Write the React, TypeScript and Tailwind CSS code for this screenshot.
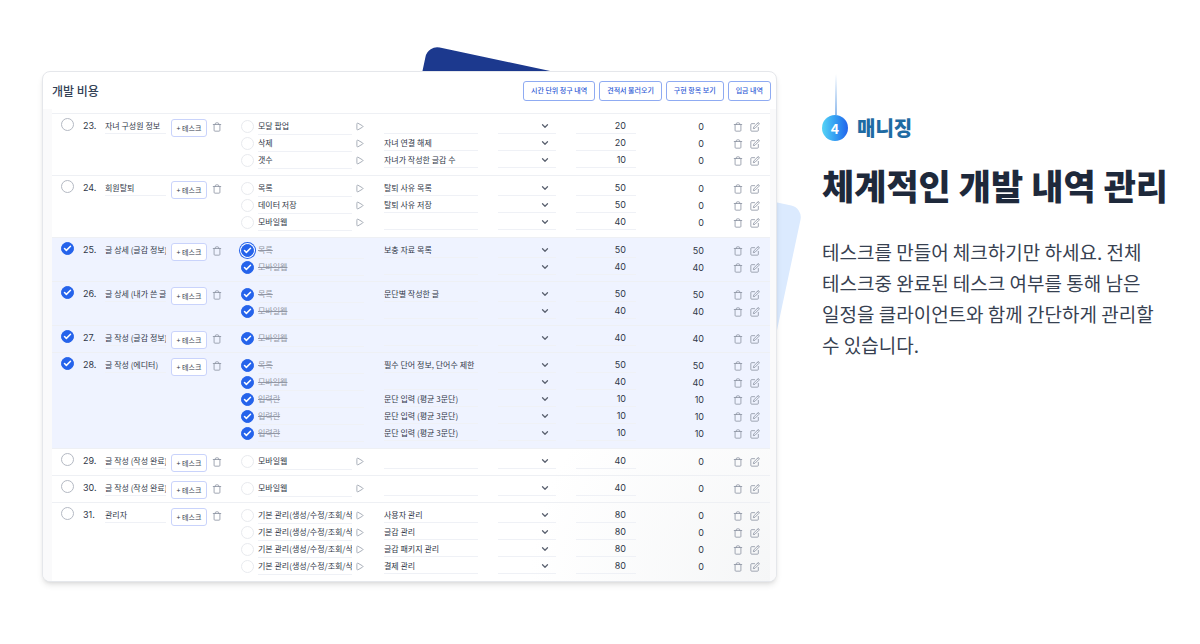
import { useState } from "react";
import { Check, ChevronDown, Play, Trash } from "lucide-react";
import { FiEdit } from "react-icons/fi";
import clsx from "clsx";

type Task = {
  name: string;
  note?: string;
  amount: number;
  focused?: boolean;
};

type Feature = {
  no: number;
  name: string;
  done?: boolean;
  tasks: Task[];
};

const ACTIONS = ["시간 단위 청구 내역", "견적서 불러오기", "구현 항목 보기", "입금 내역"];

const FEATURES: Feature[] = [
  {
    no: 23,
    name: "자녀 구성원 정보",
    tasks: [
      { name: "모달 팝업", amount: 20 },
      { name: "삭제", note: "자녀 연결 해제", amount: 20 },
      { name: "갯수", note: "자녀가 작성한 글감 수", amount: 10 },
    ],
  },
  {
    no: 24,
    name: "회원탈퇴",
    tasks: [
      { name: "목록", note: "탈퇴 사유 목록", amount: 50 },
      { name: "데이터 저장", note: "탈퇴 사유 저장", amount: 50 },
      { name: "모바일웹", amount: 40 },
    ],
  },
  {
    no: 25,
    name: "글 상세 (글감 정보)",
    done: true,
    tasks: [
      { name: "목록", note: "보충 자료 목록", amount: 50, focused: true },
      { name: "모바일웹", amount: 40 },
    ],
  },
  {
    no: 26,
    name: "글 상세 (내가 쓴 글)",
    done: true,
    tasks: [
      { name: "목록", note: "문단별 작성한 글", amount: 50 },
      { name: "모바일웹", amount: 40 },
    ],
  },
  {
    no: 27,
    name: "글 작성 (글감 정보)",
    done: true,
    tasks: [{ name: "모바일웹", amount: 40 }],
  },
  {
    no: 28,
    name: "글 작성 (에디터)",
    done: true,
    tasks: [
      { name: "목록", note: "필수 단어 정보, 단어수 제한", amount: 50 },
      { name: "모바일웹", amount: 40 },
      { name: "입력란", note: "문단 입력 (평균 3문단)", amount: 10 },
      { name: "입력란", note: "문단 입력 (평균 3문단)", amount: 10 },
      { name: "입력란", note: "문단 입력 (평균 3문단)", amount: 10 },
    ],
  },
  {
    no: 29,
    name: "글 작성 (작성 완료)",
    tasks: [{ name: "모바일웹", amount: 40 }],
  },
  {
    no: 30,
    name: "글 작성 (작성 완료)",
    tasks: [{ name: "모바일웹", amount: 40 }],
  },
  {
    no: 31,
    name: "관리자",
    tasks: [
      { name: "기본 관리(생성/수정/조회/삭제)", note: "사용자 관리", amount: 80 },
      { name: "기본 관리(생성/수정/조회/삭제)", note: "글감 관리", amount: 80 },
      { name: "기본 관리(생성/수정/조회/삭제)", note: "글감 패키지 관리", amount: 80 },
      { name: "기본 관리(생성/수정/조회/삭제)", note: "결제 관리", amount: 80 },
    ],
  },
];

const field = "block h-4 border-b border-[#eff1f6] bg-transparent p-0 text-[8px] leading-4 outline-none";

function RoundCheck({ label, initial, faint, focused }: { label: string; initial: boolean; faint?: boolean; focused?: boolean }) {
  const [checked, setChecked] = useState(initial);
  return (
    <label className="grid size-[13px] place-items-center">
      <input
        type="checkbox"
        aria-label={label}
        checked={checked}
        onChange={(e) => setChecked(e.target.checked)}
        className={clsx(
          "col-start-1 row-start-1 size-[13px] appearance-none rounded-full border bg-white checked:border-[#2563eb] checked:bg-[#2563eb]",
          faint ? "border-[#e8eaee]" : "border-[#b4b9c3]",
          focused && "ring-1 ring-[#2563eb] ring-offset-1"
        )}
      />
      {checked && <Check className="pointer-events-none z-10 col-start-1 row-start-1 size-[9px] text-white" strokeWidth={4} />}
    </label>
  );
}

function IconButton({ label, children }: { label: string; children: React.ReactNode }) {
  return (
    <button type="button" aria-label={label} className="block text-[#8e95a3] hover:text-gray-700">
      {children}
    </button>
  );
}

function FeatureRows({ feature }: { feature: Feature }) {
  const { no, name, done = false, tasks } = feature;
  const span = tasks.length;
  const top = "border-t border-[#eef0f4] pt-1 align-top";

  return (
    <tbody className={clsx(done && "bg-[#eff3ff]")}>
      {tasks.map((task, i) => {
        const first = i === 0;
        const last = i === span - 1;
        const cell = clsx(
          "align-top",
          first && "border-t border-[#eef0f4] pt-1",
          last && (span > 2 ? "pb-1.5" : "pb-[5px]")
        );
        const label = `${no}-${i + 1}`;
        return (
          <tr key={i}>
            {first && (
              <>
                <td rowSpan={span} className={clsx(top, "pl-[9px]")}>
                  <RoundCheck label={`${no} 완료`} initial={done} />
                </td>
                <td rowSpan={span} className={clsx(top, "pl-1.5 font-['Inter','Noto_Sans_CJK_KR',sans-serif] text-[9px] leading-[16px]")}>
                  {no}.
                </td>
                <td rowSpan={span} className={top}>
                  <input aria-label={`${no} 기능명`} defaultValue={name} className={clsx(field, "w-[61px]")} />
                </td>
                <td rowSpan={span} className={top}>
                  <button
                    type="button"
                    className="mt-px block h-[18px] w-9 rounded-[3px] border border-[#c9d3fb] bg-white text-[7px] leading-4 whitespace-nowrap"
                  >
                    + 테스크
                  </button>
                </td>
                <td rowSpan={span} className={clsx(top, "pl-px")}>
                  <div className="flex h-[17px] items-center">
                    <IconButton label={`${no} 삭제`}>
                      <Trash className="size-[10px]" strokeWidth={2} />
                    </IconButton>
                  </div>
                </td>
              </>
            )}
            <td className={cell}>
              <div className="flex h-[17px] items-center">
                <RoundCheck label={`${label} 완료`} initial={done} faint focused={task.focused} />
              </div>
            </td>
            <td className={cell}>
              <div className="flex h-[17px] items-center gap-[3px]">
                <input
                  aria-label={`${label} 테스크명`}
                  defaultValue={task.name}
                  className={clsx(field, done ? "w-[106px] text-[#9297a5] line-through" : "w-[94px]")}
                />
                {!done && (
                  <IconButton label={`${label} 시작`}>
                    <Play className="size-[9px]" strokeWidth={2} />
                  </IconButton>
                )}
              </div>
            </td>
            <td className={clsx(cell, "pr-5")}>
              <input aria-label={`${label} 설명`} defaultValue={task.note} className={clsx(field, "w-full")} />
            </td>
            <td className={cell}>
              <div className="grid w-[58px] items-center">
                <select aria-label={`${label} 담당자`} className={clsx(field, "col-start-1 row-start-1 w-full appearance-none")}>
                  <option></option>
                </select>
                <ChevronDown className="pointer-events-none col-start-1 row-start-1 mr-[6px] size-[10px] justify-self-end text-[#5b6270]" strokeWidth={3} />
              </div>
            </td>
            <td className={cell}>
              <input
                aria-label={`${label} 금액`}
                defaultValue={task.amount}
                className="block h-4 w-[60px] border-b border-[#eff1f6] bg-transparent pr-[10px] text-right font-['Inter',sans-serif] text-[9px] leading-4 outline-none"
              />
            </td>
            <td className={clsx(cell, "text-right font-['Inter',sans-serif] text-[9px] leading-[17px]")}>{done ? task.amount : 0}</td>
            <td className={cell}>
              <div className="flex h-[17px] items-center gap-[7px] pl-[29px]">
                <IconButton label={`${label} 삭제`}>
                  <Trash className="size-[10px]" strokeWidth={2} />
                </IconButton>
                <IconButton label={`${label} 편집`}>
                  <FiEdit className="size-[10px]" />
                </IconButton>
              </div>
            </td>
          </tr>
        );
      })}
    </tbody>
  );
}

function CostPanel() {
  return (
    <div className="relative min-w-0 flex-1">
      {/* 뒤쪽 장식 */}
      <div className="absolute -top-[26px] left-[386px] size-48 origin-top-left rotate-12 rounded-xl bg-blue-900" />
      <div className="absolute top-[137px] -right-[26px] size-40 origin-top-right rotate-12 rounded-xl bg-blue-100" />

      <div className="relative overflow-hidden rounded-lg border border-gray-200 bg-white shadow-md">
        <div className="flex h-[37px] items-center justify-between pr-[5px] pl-[9px]">
          <h3 className="text-xs font-medium text-[#334155]">개발 비용</h3>
          <div className="flex gap-1">
            {ACTIONS.map((action) => (
              <button
                key={action}
                type="button"
                className="h-5 rounded-[3px] border border-[#8fabf2] bg-white px-[7px] text-[7px] font-medium whitespace-nowrap text-[#2f5bd6]"
              >
                {action}
              </button>
            ))}
          </div>
        </div>

        <div className="bg-[#fafafb] pr-1.5 pl-[9px]">
          <div className="bg-[radial-gradient(circle_at_bottom_right,#f5f6f7,#ffffff_240px)] pt-1">
            <table className="w-full table-fixed border-separate border-spacing-0 text-[#2f3747]">
              <colgroup>
                <col className="w-[25px]" />
                <col className="w-[28px]" />
                <col className="w-[66px]" />
                <col className="w-[40px]" />
                <col className="w-[30px]" />
                <col className="w-[17px]" />
                <col className="w-[126px]" />
                <col />
                <col className="w-[78px]" />
                <col className="w-[84px]" />
                <col className="w-[44px]" />
                <col className="w-[66px]" />
              </colgroup>
              {FEATURES.map((feature) => (
                <FeatureRows key={feature.no} feature={feature} />
              ))}
            </table>
          </div>
        </div>
      </div>
    </div>
  );
}

export default function App() {
  return (
    <main className="bg-white font-['Noto_Sans_CJK_KR',sans-serif]">
      <section className="flex items-start gap-[45px] px-[30px] pt-[71px] pb-16 pl-[42px]">
        <CostPanel />

        <div className="w-[348px] shrink-0 pt-[3px] break-keep">
          <div className="ml-[13px] h-[41px] w-0.5 bg-linear-to-b from-transparent to-[#8fbaec]" />
          <div className="flex items-center gap-[9px]">
            <span className="grid size-[26px] place-items-center rounded-full bg-linear-to-r from-[#56d4f5] to-[#2563eb] text-sm leading-none font-bold text-white">
              4
            </span>
            <span className="text-xl leading-[26px] font-black text-[#1f6ba3]">매니징</span>
          </div>
          <h2 className="mt-5 text-[35px] leading-[48px] font-black whitespace-nowrap text-[#1e293b]">체계적인 개발 내역 관리</h2>
          <p className="mt-[27px] text-[19px] leading-[31px] text-[#374151]">
            테스크를 만들어 체크하기만 하세요. 전체 테스크중 완료된 테스크 여부를 통해 남은 일정을 클라이언트와 함께 간단하게 관리할 수 있습니다.
          </p>
        </div>
      </section>
    </main>
  );
}
